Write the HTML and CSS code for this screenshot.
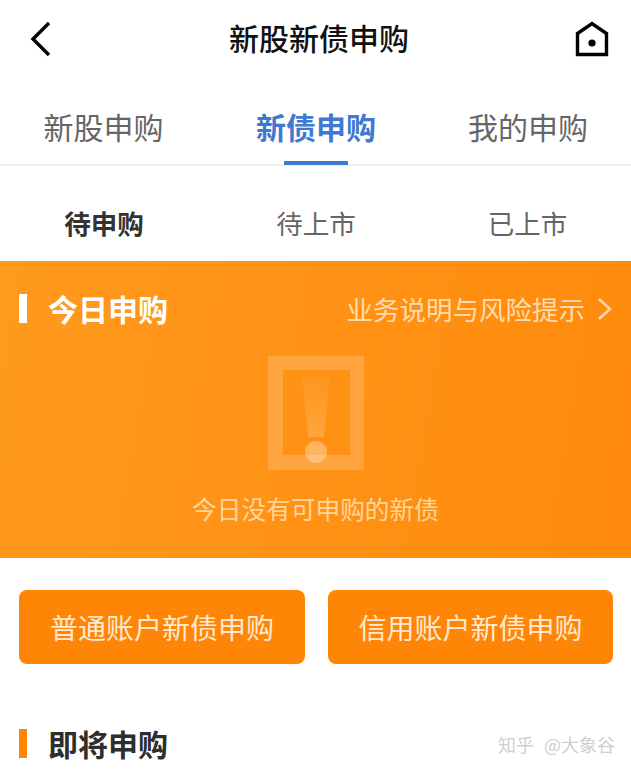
FILE: index.html

```html
<!DOCTYPE html>
<html lang="zh-CN">
<head>
  <meta charset="UTF-8" />
  <meta name="viewport" content="width=device-width, initial-scale=1.0"/>
  <title>新股新债申购</title>
  <link rel="stylesheet" href="styles.css">
</head>
<body>

  <div class="header">
    <svg class="back" width="24" height="36" viewBox="0 0 24 36"><path d="M20 2 L4 18 L20 34" fill="none" stroke="#000" stroke-width="3.4"/></svg>
    <div class="header-title">新股新债申购</div>
    <svg class="home" width="34" height="36" viewBox="0 0 34 36"><path d="M2.5 33.5 V12.5 L17 2.5 L31.5 12.5 V33.5 Z" fill="none" stroke="#000" stroke-width="3.4"/><circle cx="17" cy="22" r="3.6" fill="#000"/></svg>
  </div>

  <div class="tabs">
    <div class="tab">新股申购</div>
    <div class="tab active">新债申购</div>
    <div class="tab">我的申购</div>
  </div>

  <div class="subtabs">
    <div class="subtab active">待申购</div>
    <div class="subtab">待上市</div>
    <div class="subtab">已上市</div>
  </div>

  <div class="panel">
    <div class="panel-head">
      <div class="mark mark-white"></div>
      <div class="section-title">今日申购</div>
      <div class="risk">业务说明与风险提示</div>
      <svg class="risk-arrow" width="16" height="24" viewBox="0 0 16 24"><path d="M2 2 L13 12 L2 22" fill="none" stroke="#fff" stroke-opacity="0.65" stroke-width="2.4"/></svg>
    </div>
    <svg class="empty-icon" width="96" height="114" viewBox="0 0 96 114">
      <defs>
        <linearGradient id="bang" x1="0" y1="0" x2="0" y2="1">
          <stop offset="0" stop-color="#fff" stop-opacity="0.03"/>
          <stop offset="1" stop-color="#fff" stop-opacity="0.17"/>
        </linearGradient>
      </defs>
      <path fill-rule="evenodd" d="M0 0 H96 V114 H0 Z M15 14 V99 H82 V14 Z" fill="#fff" fill-opacity="0.18"/>
      <path d="M34 19 H62 L56 81 H40 Z" fill="url(#bang)"/>
      <circle cx="48" cy="96" r="11" fill="#fff" fill-opacity="0.32"/>
    </svg>
    <div class="empty-text">今日没有可申购的新债</div>
  </div>

  <div class="actions">
    <div class="btn">普通账户新债申购</div>
    <div class="btn btn-credit">信用账户新债申购</div>
  </div>

  <div class="coming">
    <div class="mark mark-orange"></div>
    <div class="section-title dark">即将申购</div>
    <div class="watermark">知乎 @大象谷</div>
  </div>

</body>
</html>
```

FILE: styles.css

```css
html, body { height: 100%; }
body { margin: 0; background: #fff; overflow: hidden; font-family: "Noto Sans CJK SC", "Noto Sans", sans-serif; }

.header { height: 78px; display: grid; grid-template-columns: 1fr auto 1fr; align-items: center; padding: 0 22px 0 29px; }
.back { display: block; }
.home { display: block; justify-self: end; }
.header-title { font-size: 30px; font-weight: 500; color: #111; line-height: 74px; height: 78px; }

.tabs { height: 88px; display: grid; grid-template-columns: 207px 218px 206px; border-bottom: 2px solid #eef0f2; box-sizing: border-box; }
.tab { font-size: 30px; line-height: 96px; text-align: center; color: #666; height: 86px; position: relative; }
.tab.active { color: #3f7ad0; font-weight: 700; }
.tab.active::after { content: ""; position: absolute; left: 77px; bottom: -1px; width: 64px; height: 4px; background: #3f7ad0; }

.subtabs { height: 95px; display: grid; grid-template-columns: 208px 216px 207px; }
.subtab { font-size: 26.5px; line-height: 114px; height: 95px; overflow: hidden; text-align: center; color: #666; }
.subtab.active { color: #333; font-weight: 700; }

.panel { height: 297px; background: linear-gradient(100deg, #ff9a1e, #ff8a0c); display: flex; flex-direction: column; align-items: center; }
.panel-head { align-self: stretch; height: 95px; display: flex; align-items: center; padding: 0 18px 0 19px; }
.mark { width: 8px; height: 29px; margin-right: 21px; }
.mark-white { background: #fff; }
.mark-orange { background: #ff8506; margin-top: -2px; }
.section-title { font-size: 30px; font-weight: 700; color: #fff; line-height: 38px; height: 40px; }
.section-title.dark { color: #2e2e2e; }
.risk { margin-left: auto; font-size: 26.5px; color: #ffdcae; line-height: 40px; }
.risk-arrow { display: block; margin-left: 12px; }
.empty-icon { display: block; }
.empty-text { margin-top: 20px; font-size: 24.7px; line-height: 36px; color: #ffd59c; }

.actions { display: flex; justify-content: space-between; padding: 32px 18px 0 19px; }
.btn { width: 286px; height: 74px; border-radius: 8px; background: #ff8506; color: #ffe9cf; font-size: 28px; line-height: 74px; text-align: center; }
.btn-credit { width: 285px; }

.coming { display: flex; align-items: center; padding: 0 16px 0 19px; margin-top: 60px; height: 40px; }
.watermark { margin-left: auto; font-size: 18px; word-spacing: 6px; color: #cfcfcf; }
```
